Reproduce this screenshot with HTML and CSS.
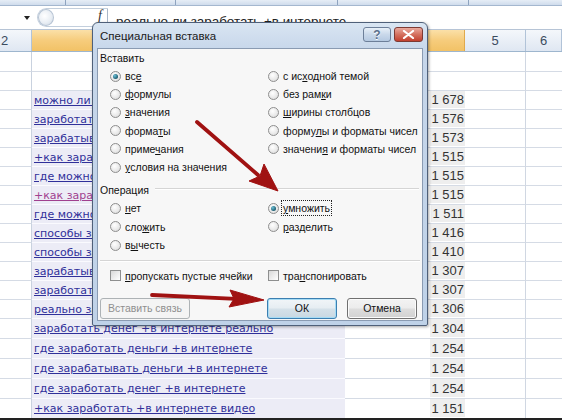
FILE: index.html
```html
<!DOCTYPE html>
<html lang="ru">
<head>
<meta charset="utf-8">
<title>Специальная вставка</title>
<link rel="stylesheet" href="styles.css">
</head>
<body>
<div class="screen">
  <div class="ribbon"><span class="rs rs1"></span><span class="rs rs2"></span><span class="rs rs3"></span><span class="rs rs4"></span></div>
  <div class="fbar">
    <div class="namebox"><span class="dd"></span></div>
    <div class="fxbox"><span class="knob"></span><span class="fx">f</span></div>
    <div class="ftext">реально ли заработать +в интернете</div>
  </div>
  <div class="hdr">
    <div class="h ha">2</div>
    <div class="h hb sel"></div>
    <div class="h hc sel"></div>
    <div class="h hd">5</div>
    <div class="h he">6</div>
  </div>
  <div class="row r20"><div class="c ca"></div><div class="c cb plain"></div><div class="c cc"></div><div class="c cd"></div><div class="c ce"></div></div>
  <div class="row"><div class="c ca"></div><div class="c cb plain"></div><div class="c cc"></div><div class="c cd"></div><div class="c ce"></div></div>
  <div class="row"><div class="c ca"></div><div class="c cb"><span class="lk">можно ли заработать +в интернете</span></div><div class="c cc"><span class="n">1 678</span></div><div class="c cd"></div><div class="c ce"></div></div>
  <div class="row"><div class="c ca"></div><div class="c cb"><span class="lk">заработать +в интернете</span></div><div class="c cc"><span class="n">1 576</span></div><div class="c cd"></div><div class="c ce"></div></div>
  <div class="row"><div class="c ca"></div><div class="c cb"><span class="lk">зарабатывать +в интернете</span></div><div class="c cc"><span class="n">1 573</span></div><div class="c cd"></div><div class="c ce"></div></div>
  <div class="row"><div class="c ca"></div><div class="c cb"><span class="lk">+как заработать +в интернете</span></div><div class="c cc"><span class="n">1 515</span></div><div class="c cd"></div><div class="c ce"></div></div>
  <div class="row"><div class="c ca"></div><div class="c cb"><span class="lk">где можно заработать +в интернете</span></div><div class="c cc"><span class="n">1 515</span></div><div class="c cd"></div><div class="c ce"></div></div>
  <div class="row"><div class="c ca"></div><div class="c cb"><span class="lk vis">+как заработать +в интернете деньги</span></div><div class="c cc"><span class="n">1 515</span></div><div class="c cd"></div><div class="c ce"></div></div>
  <div class="row"><div class="c ca"></div><div class="c cb"><span class="lk">где можно заработать деньги +в интернете</span></div><div class="c cc"><span class="n">1 511</span></div><div class="c cd"></div><div class="c ce"></div></div>
  <div class="row"><div class="c ca"></div><div class="c cb"><span class="lk">способы заработать +в интернете</span></div><div class="c cc"><span class="n">1 416</span></div><div class="c cd"></div><div class="c ce"></div></div>
  <div class="row"><div class="c ca"></div><div class="c cb"><span class="lk">способы заработка +в интернете</span></div><div class="c cc"><span class="n">1 410</span></div><div class="c cd"></div><div class="c ce"></div></div>
  <div class="row"><div class="c ca"></div><div class="c cb"><span class="lk">зарабатывать +в интернете деньги</span></div><div class="c cc"><span class="n">1 307</span></div><div class="c cd"></div><div class="c ce"></div></div>
  <div class="row"><div class="c ca"></div><div class="c cb"><span class="lk">заработать +в интернете без вложений</span></div><div class="c cc"><span class="n">1 307</span></div><div class="c cd"></div><div class="c ce"></div></div>
  <div class="row"><div class="c ca"></div><div class="c cb"><span class="lk">реально заработать +в интернете</span></div><div class="c cc"><span class="n">1 306</span></div><div class="c cd"></div><div class="c ce"></div></div>
  <div class="row r20"><div class="c ca"></div><div class="c cb"><span class="lk">заработать денег +в интернете реально</span></div><div class="c cc"><span class="n">1 304</span></div><div class="c cd"></div><div class="c ce"></div></div>
  <div class="row r20"><div class="c ca"></div><div class="c cb"><span class="lk">где заработать деньги +в интернете</span></div><div class="c cc"><span class="n">1 254</span></div><div class="c cd"></div><div class="c ce"></div></div>
  <div class="row r20"><div class="c ca"></div><div class="c cb"><span class="lk">где зарабатывать деньги +в интернете</span></div><div class="c cc"><span class="n">1 254</span></div><div class="c cd"></div><div class="c ce"></div></div>
  <div class="row r20"><div class="c ca"></div><div class="c cb"><span class="lk">где заработать денег +в интернете</span></div><div class="c cc"><span class="n">1 254</span></div><div class="c cd"></div><div class="c ce"></div></div>
  <div class="row r20"><div class="c ca"></div><div class="c cb"><span class="lk">+как заработать +в интернете видео</span></div><div class="c cc"><span class="n">1 151</span></div><div class="c cd"></div><div class="c ce"></div></div>
</div>

<div class="dlg">
  <div class="title">
    <span class="ttext">Специальная вставка</span>
    <span class="cap help">?</span>
    <span class="cap close"><svg width="13" height="9" viewBox="0 0 13 9"><path d="M2 1 L11 8 M11 1 L2 8" stroke="#fff" stroke-width="2.2" stroke-linecap="round"/></svg></span>
  </div>
  <div class="dbody">
    <div class="glabel">Вставить</div>
    <div class="opts six">
      <div class="rb"><span class="rd on"></span><span>вс<u>е</u></span></div>
      <div class="rb"><span class="rd"></span><span><u>ф</u>ормулы</span></div>
      <div class="rb"><span class="rd"></span><span><u>з</u>начения</span></div>
      <div class="rb"><span class="rd"></span><span>форма<u>т</u>ы</span></div>
      <div class="rb"><span class="rd"></span><span>приме<u>ч</u>ания</span></div>
      <div class="rb"><span class="rd"></span><span><u>у</u>словия на значения</span></div>
      <div class="rb"><span class="rd"></span><span>с ис<u>х</u>одной темой</span></div>
      <div class="rb"><span class="rd"></span><span>без рам<u>к</u>и</span></div>
      <div class="rb"><span class="rd"></span><span><u>ш</u>ирины столбцов</span></div>
      <div class="rb"><span class="rd"></span><span>форму<u>л</u>ы и форматы чисел</span></div>
      <div class="rb"><span class="rd"></span><span>значени<u>я</u> и форматы чисел</span></div>
    </div>
    <div class="glabel line">Операция</div>
    <div class="opts three">
      <div class="rb"><span class="rd"></span><span><u>н</u>ет</span></div>
      <div class="rb"><span class="rd"></span><span>сло<u>ж</u>ить</span></div>
      <div class="rb"><span class="rd"></span><span>в<u>ы</u>честь</span></div>
      <div class="rb"><span class="rd on"></span><span class="focus"><u>у</u>множить</span></div>
      <div class="rb"><span class="rd"></span><span><u>р</u>азделить</span></div>
    </div>
    <div class="sep"></div>
    <div class="opts one">
      <div class="rb"><span class="chk"></span><span><u>п</u>ропускать пустые ячейки</span></div>
      <div class="rb"><span class="chk"></span><span>тра<u>н</u>спонировать</span></div>
    </div>
    <div class="btns">
      <span class="btn dis">Вставить связь</span>
      <span class="btn ok">ОК</span>
      <span class="btn">Отмена</span>
    </div>
  </div>
</div>

<svg class="arrows" width="562" height="420" viewBox="0 0 562 420">
  <g fill="#a01212" stroke="#a01212">
    <line x1="197" y1="122" x2="258" y2="175" stroke-width="3.8" stroke-linecap="round"/>
    <polygon points="278,191 249,181 260,176 264,164" stroke-width="1" stroke-linejoin="round"/>
    <line x1="152" y1="295" x2="236" y2="298.8" stroke-width="3.8" stroke-linecap="round"/>
    <polygon points="264,300 229,307 234,298.7 230,290" stroke-width="1" stroke-linejoin="round"/>
  </g>
</svg>
</body>
</html>
```

FILE: styles.css
```css
* { box-sizing: border-box; }
html, body { margin: 0; padding: 0; }
body {
  width: 562px;
  height: 420px;
  overflow: hidden;
  position: relative;
  background: #fff;
  font-family: "Liberation Sans", Arial, sans-serif;
}
.screen {
  height: 420px;
  border-bottom: 2px solid #222;
  display: flex;
  flex-direction: column;
  overflow: hidden;
}
.ribbon {
  height: 6px;
  flex: none;
  display: flex;
  background: linear-gradient(#e6edf6, #cfdcec);
  border-bottom: 1px solid #a4b7cf;
}
.rs { border-right: 1px solid #8ea3bf; height: 100%; }
.rs1 { width: 66px; }
.rs2 { width: 110px; }
.rs3 { width: 162px; }
.rs4 { width: 131px; }

.fbar {
  height: 24px;
  flex: none;
  display: flex;
  align-items: center;
  background: #fff;
  border-bottom: 1px solid #b6c4d6;
}
.namebox {
  width: 34px;
  height: 100%;
  display: flex;
  align-items: center;
  justify-content: flex-end;
  padding-right: 4px;
}
.dd {
  width: 0;
  height: 0;
  border-left: 3px solid transparent;
  border-right: 3px solid transparent;
  border-top: 4px solid #222;
}
.fxbox {
  margin-left: 3px;
  width: 71px;
  height: 19px;
  display: flex;
  align-items: center;
  justify-content: space-between;
  border: 1px solid #c3cfdd;
  border-right: 1px solid #a9b7c9;
  border-radius: 10px 0 0 10px;
  padding-right: 5px;
}
.knob {
  width: 16px;
  height: 17px;
  border-radius: 50%;
  border: 1px solid #b7c4d4;
  background: radial-gradient(circle at 40% 40%, #ffffff, #e9eef4 55%, #c9d3df);
}
.fx {
  font-family: "Liberation Serif", serif;
  font-style: italic;
  font-size: 14px;
  color: #333;
  margin-bottom: 3px;
}
.ftext {
  padding-left: 8px;
  font-size: 13.4px;
  color: #222;
  white-space: nowrap;
  margin-top: 8px;
}

.hdr {
  height: 22px;
  flex: none;
  display: grid;
  grid-template-columns: 32px 313px 120px 61px 36px;
  border-bottom: 1px solid #9eb6ce;
}
.h {
  background: linear-gradient(#f4f7fb, #dfe7f2);
  border-right: 1px solid #b1c3d8;
  font-size: 13px;
  color: #3b4b5e;
  line-height: 21px;
  text-align: center;
}
.h.ha { text-align: left; padding-left: 1px; }
.h.sel {
  background: linear-gradient(#fbe0a8, #f6cc7c 50%, #f2c266);
  border-right-color: #e0a94c;
}
.h.hb { border-right: none; }

.row {
  height: 19px;
  flex: none;
  display: grid;
  grid-template-columns: 32px 313px 120px 61px 36px;
}
.row.r20 { height: 20px; }
.c {
  border-bottom: 1px solid #d5dbe5;
  overflow: hidden;
  white-space: nowrap;
  display: flex;
  align-items: center;
}
.ca { border-right: 1px solid #c9d2df; }
.cb {
  background: #ececf6;
  border-bottom-color: #fafafe;
  padding-left: 2px;
}
.cb.plain { background: #fff; border-bottom-color: #d5dbe5; }
.cc { justify-content: flex-end; padding-bottom: 1px; }
.cd { border-right: 1px solid #d0d7e2; }
.lk {
  font-family: "DejaVu Sans", Verdana, sans-serif;
  font-size: 11px;
  color: #30309a;
  text-decoration: underline;
}
.lk.vis { color: #a0408f; }
.n {
  height: 100%;
  display: flex;
  align-items: center;
  background: #eeeeee;
  padding: 0 1px;
  font-size: 13px;
  color: #333;
}

/* dialog */
.dlg {
  position: absolute;
  left: 92px;
  top: 22px;
  width: 336px;
  height: 304px;
  border: 1px solid #4f6079;
  border-radius: 6px 6px 2px 2px;
  background: linear-gradient(#d9e5f2, #c6d6ea 28px, #bfd2e8);
  padding: 0 4px 4px;
  display: flex;
  flex-direction: column;
  box-shadow: 1px 1px 3px rgba(0, 0, 0, 0.35);
  font-size: 10.5px;
  color: #111;
}
.title {
  height: 25px;
  flex: none;
  display: flex;
  align-items: flex-start;
}
.ttext {
  font-size: 11.5px;
  margin: 7px 0 0 3px;
  flex: 1;
  color: #1a1a1a;
}
.cap {
  margin-top: 4px;
  height: 15px;
  border: 1px solid #6d7f99;
  border-radius: 3px;
  display: flex;
  align-items: center;
  justify-content: center;
}
.help {
  width: 28px;
  margin-right: 3px;
  background: linear-gradient(#e8f0f8, #c9d8ea 50%, #b5c9e1);
  color: #5a6f8c;
  font-size: 12px;
  font-weight: bold;
  text-shadow: 0 1px 0 #fff;
}
.close {
  width: 29px;
  border-color: #7d3a33;
  background: linear-gradient(#e9a99d, #d4705f 50%, #c2402f);
}
.dbody {
  flex: 1;
  background: #f7f7f7;
  border: 1px solid #8a9bb2;
  display: flex;
  flex-direction: column;
}
.glabel {
  height: 18px;
  line-height: 18px;
  padding-left: 2px;
  flex: none;
  display: flex;
  align-items: center;
}
.glabel.line { margin-top: 5px; }
.glabel.line::after {
  content: "";
  flex: 1;
  height: 0;
  border-top: 1px solid #d5d5d5;
  border-bottom: 1px solid #fff;
  margin: 0 3px 2px 6px;
}
.opts {
  display: grid;
  grid-template-columns: 158px 1fr;
  grid-auto-flow: column;
  padding-left: 12px;
  flex: none;
}
.opts.six { grid-template-rows: repeat(6, 18.2px); }
.opts.three { grid-template-rows: repeat(3, 18.5px); }
.opts.one { grid-template-rows: 18px; margin-top: 5px; }
.rb {
  display: flex;
  align-items: center;
  white-space: nowrap;
}
.rd {
  width: 11px;
  height: 11px;
  flex: none;
  border-radius: 50%;
  border: 1px solid #8e8e8e;
  background: radial-gradient(circle at 40% 35%, #ffffff, #e6e6e6 65%, #cfcfcf);
  margin-right: 4px;
  position: relative;
}
.rd.on::after {
  content: "";
  position: absolute;
  left: 2px;
  top: 2px;
  width: 5px;
  height: 5px;
  border-radius: 50%;
  background: radial-gradient(circle at 35% 35%, #6cc0d6, #175569 75%);
}
.chk {
  width: 11px;
  height: 11px;
  flex: none;
  border: 1px solid #8e8f8f;
  background: linear-gradient(135deg, #d8d8d8, #ffffff);
  margin-right: 4px;
}
.focus {
  border: 1px dotted #222;
  padding: 1px 1px;
  margin-left: -2px;
}
.sep {
  flex: none;
  margin: 5px 2px 0 2px;
  border-top: 1px solid #d5d5d5;
  border-bottom: 1px solid #fff;
}
.btns {
  flex: none;
  display: flex;
  gap: 10px;
  margin-top: 13px;
  padding: 0 5px 0 2px;
}
.btn {
  width: 70px;
  height: 21px;
  border: 1px solid #707070;
  border-radius: 3px;
  background: linear-gradient(#f3f3f3, #ececec 48%, #dddddd 52%, #d2d2d2);
  display: flex;
  align-items: center;
  justify-content: center;
  box-shadow: inset 0 0 0 1px #fbfbfb;
}
.btn.dis {
  width: 90px;
  margin-right: auto;
  color: #8f8f8f;
  border-color: #adb2b5;
  background: #f4f4f4;
  box-shadow: none;
}
.btn.ok {
  border-color: #3c7fb1;
  box-shadow: inset 0 0 0 1px #a6dcf5;
  background: linear-gradient(#f1f5f8, #e6edf2 48%, #d5e1e9 52%, #c9d8e2);
}
.arrows {
  position: absolute;
  left: 0;
  top: 0;
  pointer-events: none;
}
```
